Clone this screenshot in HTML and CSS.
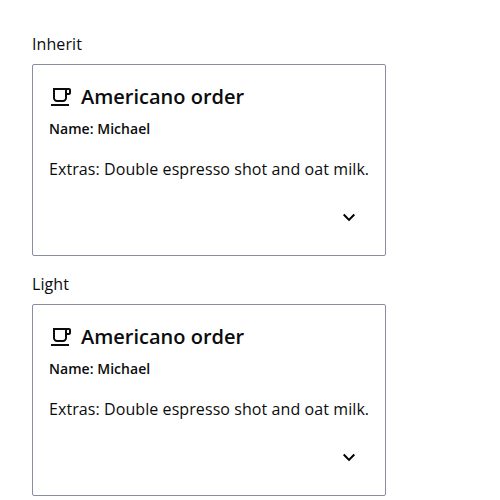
FILE: index.html
```html
<!DOCTYPE html>
<html lang="en">
<head>
<meta charset="utf-8">
<title>Card themes</title>
<link rel="stylesheet" href="styles.css">
</head>
<body>
<main class="themes">
  <section class="theme">
    <p class="theme-label">Inherit</p>
    <article class="card">
      <header class="card-header">
        <svg class="icon" viewBox="0 0 24 24" aria-hidden="true"><path d="M20 3H4v10c0 2.21 1.79 4 4 4h6c2.21 0 4-1.79 4-4v-3h2c1.11 0 2-.9 2-2V5c0-1.11-.89-2-2-2zm-4 10c0 1.1-.9 2-2 2H8c-1.1 0-2-.9-2-2V5h10v8zm4-5h-2V5h2v3zM2 19h18v2H2z"/></svg>
        <h2 class="card-title">Americano order</h2>
      </header>
      <p class="card-subtitle">Name: Michael</p>
      <p class="card-text">Extras: Double espresso shot and oat milk.</p>
      <div class="card-actions">
        <button class="toggle" aria-label="Expand"><svg class="icon" viewBox="0 0 24 24"><path d="M7.41 7.84 12 12.42l4.59-4.58L18 9.25l-6 6-6-6z"/></svg></button>
      </div>
    </article>
  </section>
  <section class="theme">
    <p class="theme-label">Light</p>
    <article class="card">
      <header class="card-header">
        <svg class="icon" viewBox="0 0 24 24" aria-hidden="true"><path d="M20 3H4v10c0 2.21 1.79 4 4 4h6c2.21 0 4-1.79 4-4v-3h2c1.11 0 2-.9 2-2V5c0-1.11-.89-2-2-2zm-4 10c0 1.1-.9 2-2 2H8c-1.1 0-2-.9-2-2V5h10v8zm4-5h-2V5h2v3zM2 19h18v2H2z"/></svg>
        <h2 class="card-title">Americano order</h2>
      </header>
      <p class="card-subtitle">Name: Michael</p>
      <p class="card-text">Extras: Double espresso shot and oat milk.</p>
      <div class="card-actions">
        <button class="toggle" aria-label="Expand"><svg class="icon" viewBox="0 0 24 24"><path d="M7.41 7.84 12 12.42l4.59-4.58L18 9.25l-6 6-6-6z"/></svg></button>
      </div>
    </article>
  </section>
</main>
</body>
</html>
```
FILE: styles.css
```css
* { box-sizing: border-box; }
body {
  margin: 0;
  padding: 32px 32px 0;
  font: 16px/24px "Open Sans", sans-serif;
  color: #0b0c0e;
  background: #fff;
}
p, h2 { margin: 0; }
.themes { display: flex; flex-direction: column; gap: 16px; align-items: flex-start; }
.theme { display: flex; flex-direction: column; gap: 8px; }
.theme-label { letter-spacing: 0.005em; }
.card {
  height: 192px;
  padding: 16px;
  border: 1px solid #898e9c;
  border-radius: 2px;
}
.card-header { display: flex; align-items: center; gap: 8px; height: 32px; }
.card-title { font-size: 20px; line-height: 32px; font-weight: 600; }
.card-subtitle { font-size: 14px; line-height: 24px; font-weight: 600; margin-top: 4px; letter-spacing: 0.0025em; }
.card-text { margin-top: 16px; letter-spacing: 0.005em; }
.card-actions { display: flex; justify-content: flex-end; margin-top: 17px; }
.toggle {
  display: flex;
  align-items: center;
  justify-content: center;
  width: 40px;
  height: 40px;
  padding: 0;
  border: 0;
  background: none;
  color: #000;
}
.icon { width: 24px; height: 24px; fill: currentColor; }
```
